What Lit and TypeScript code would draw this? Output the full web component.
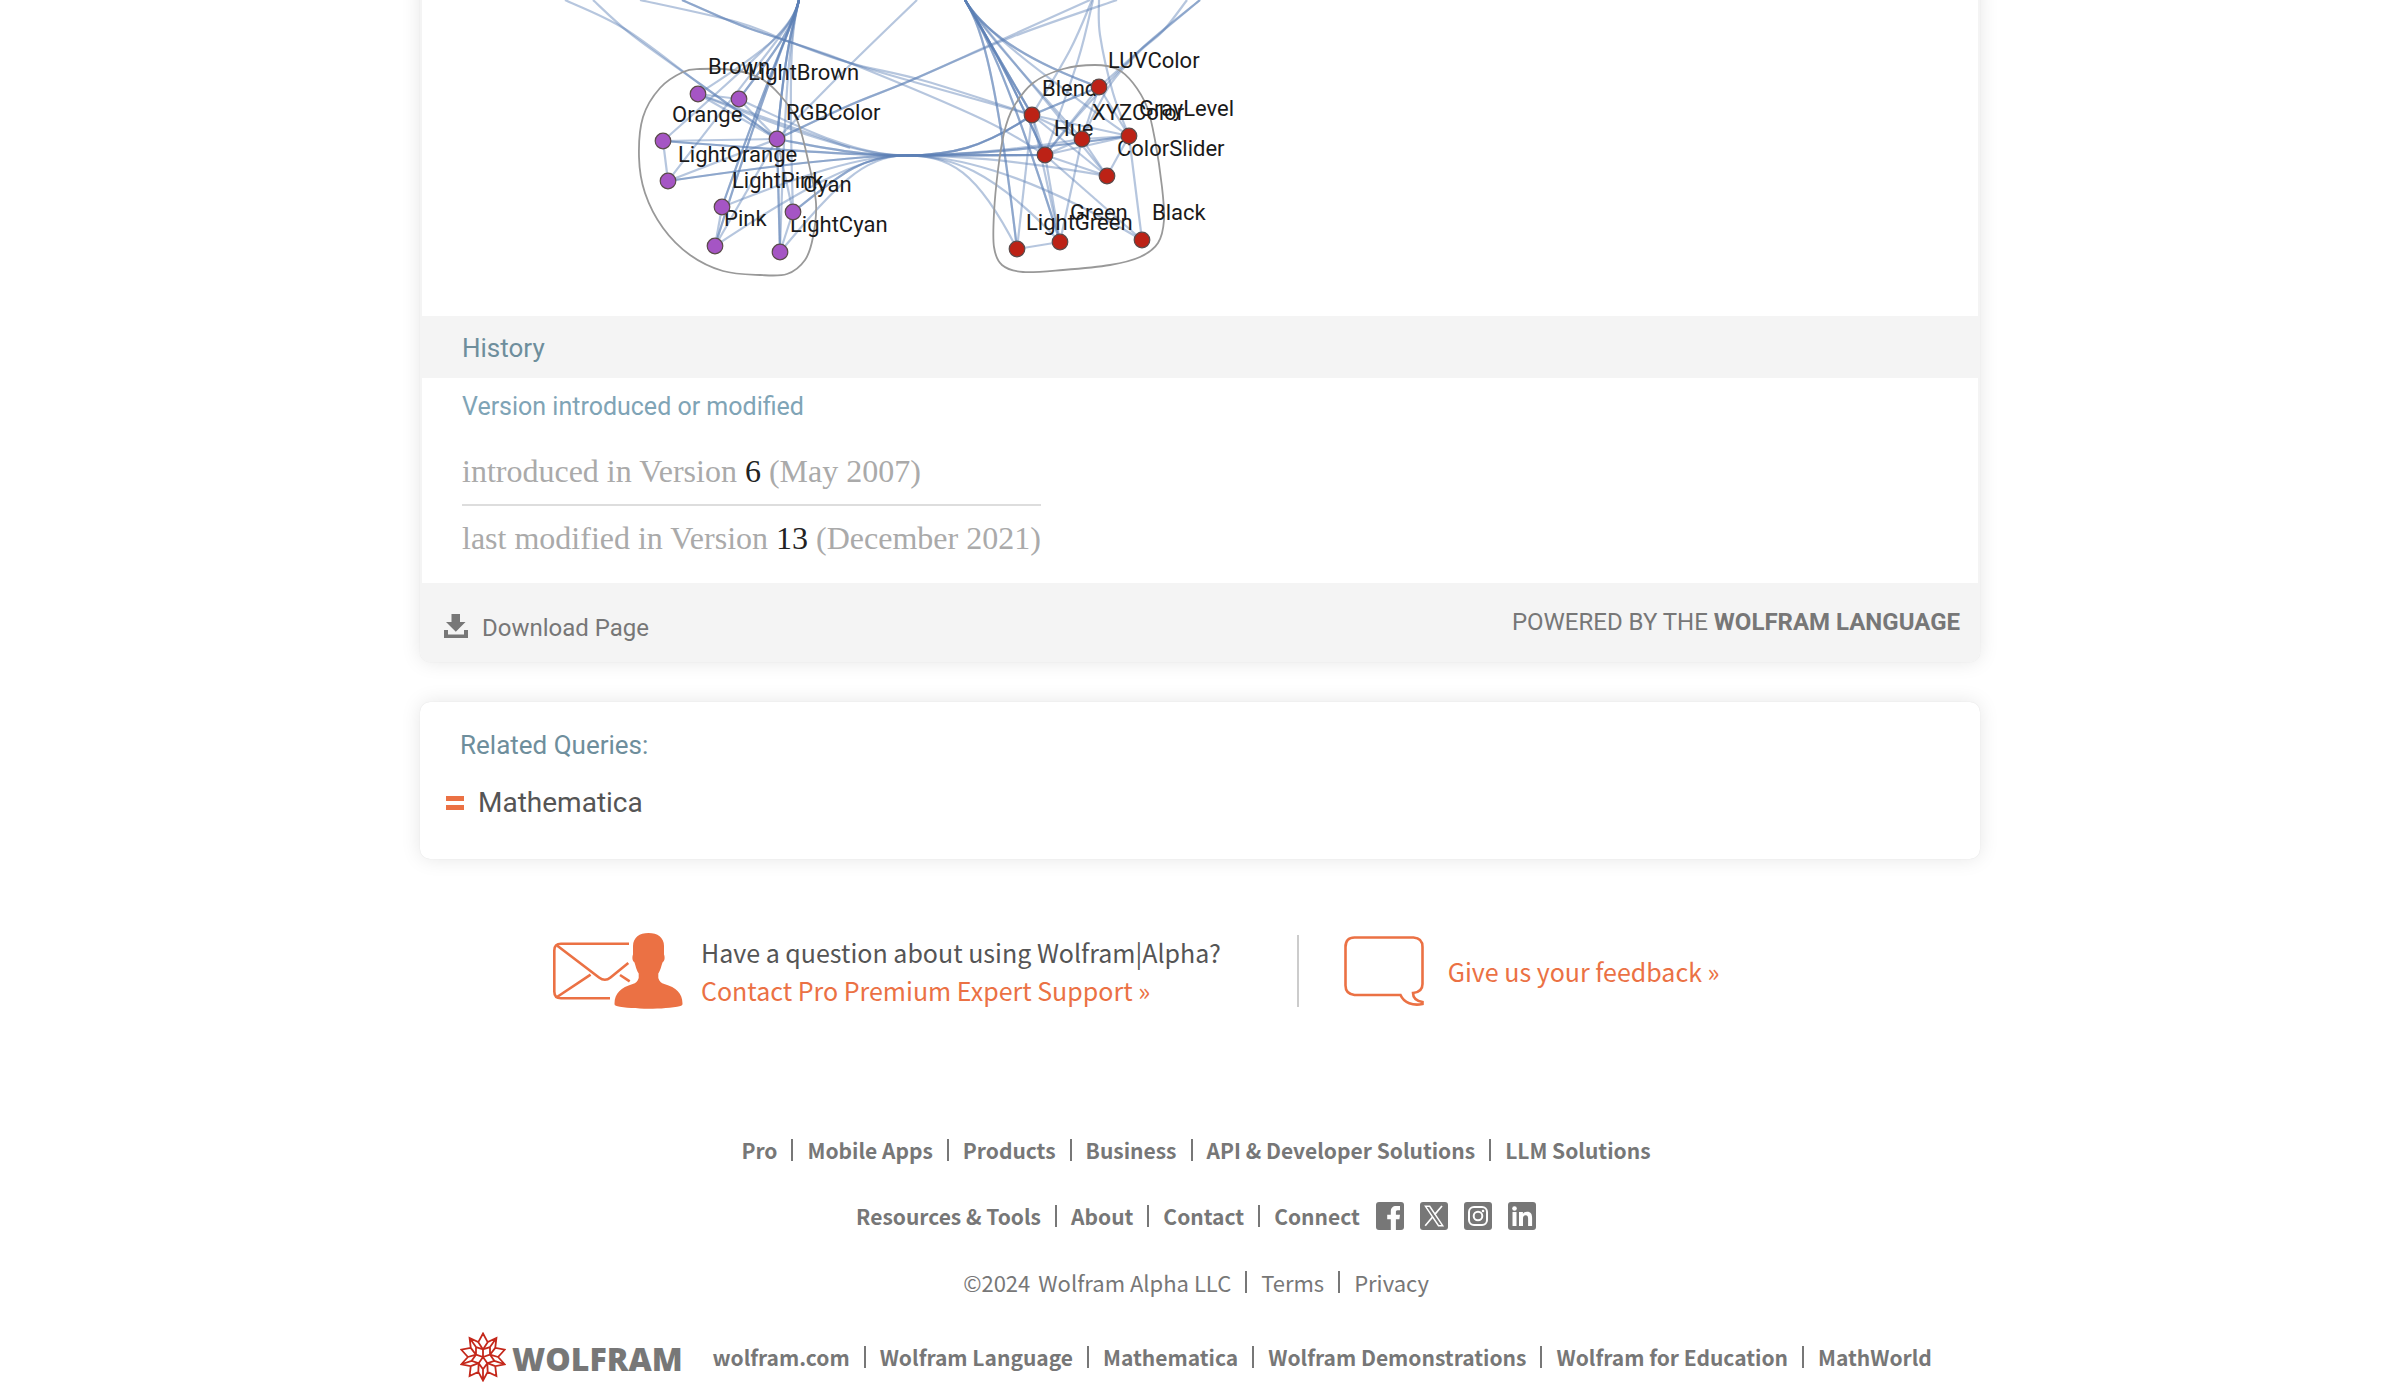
import { LitElement, css, html, svg } from "lit";
import { customElement } from "lit/decorators.js";

type Point = [number, number];
interface Label {
  text: string;
  at: Point;
}

const PURPLE: Record<string, Point> = {
  brown: [698, 94],
  lightBrown: [739, 99],
  rgb: [777, 139],
  orange: [663, 141],
  lightOrange: [668, 181],
  lightPink: [722, 207],
  cyan: [793, 212],
  pink: [715, 246],
  lightCyan: [780, 252],
};

const RED: Record<string, Point> = {
  luv: [1099, 87],
  blend: [1032, 115],
  hue: [1045, 155],
  xyz: [1082, 139],
  gray: [1129, 136],
  slider: [1107, 176],
  black: [1142, 240],
  green: [1060, 242],
  lightGreen: [1017, 249],
};

const LABELS: Label[] = [
  { text: "Brown", at: [708, 74] },
  { text: "LightBrown", at: [748, 80] },
  { text: "Orange", at: [672, 122] },
  { text: "RGBColor", at: [786, 120] },
  { text: "LightOrange", at: [678, 162] },
  { text: "LightPink", at: [732, 188] },
  { text: "Cyan", at: [803, 192] },
  { text: "Pink", at: [724, 226] },
  { text: "LightCyan", at: [790, 232] },
  { text: "LUVColor", at: [1108, 68] },
  { text: "Blend", at: [1042, 96] },
  { text: "XYZColor", at: [1092, 120] },
  { text: "GrayLevel", at: [1139, 116] },
  { text: "Hue", at: [1054, 136] },
  { text: "ColorSlider", at: [1117, 156] },
  { text: "Green", at: [1070, 220] },
  { text: "LightGreen", at: [1026, 230] },
  { text: "Black", at: [1152, 220] },
];

const PURPLE_HULL: Point[] = [
  [700, 69], [733, 70], [760, 78], [780, 95], [797, 120], [808, 160], [816, 203],
  [813, 237], [805, 260], [787, 274], [760, 275], [723, 271], [690, 255],
  [663, 228], [645, 193], [639, 157], [643, 117], [660, 88], [683, 72],
];

const RED_HULL: Point[] = [
  [1095, 65], [1117, 69], [1133, 83], [1147, 107], [1155, 140], [1162, 187],
  [1164, 220], [1158, 243], [1140, 257], [1110, 265], [1063, 270], [1023, 272],
  [1002, 265], [994, 247], [994, 213], [998, 170], [1004, 133], [1013, 108],
  [1033, 83], [1063, 69],
];

/** Closed smooth curve through the given points. */
function closedCurve(pts: Point[]): string {
  const n = pts.length;
  let d = `M${pts[0].join(" ")}`;
  for (let i = 0; i < n; i++) {
    const [a, b, c, e] = [pts[(i + n - 1) % n], pts[i], pts[(i + 1) % n], pts[(i + 2) % n]];
    d += `C${b[0] + (c[0] - a[0]) / 6} ${b[1] + (c[1] - a[1]) / 6} ${c[0] - (e[0] - b[0]) / 6} ${c[1] - (e[1] - b[1]) / 6} ${c[0]} ${c[1]}`;
  }
  return d + "Z";
}

/** Open smooth curve through the given points. */
function openCurve(pts: Point[]): string {
  let d = `M${pts[0].join(" ")}`;
  for (let i = 0; i < pts.length - 1; i++) {
    const a = pts[Math.max(0, i - 1)];
    const b = pts[i];
    const c = pts[i + 1];
    const e = pts[Math.min(pts.length - 1, i + 2)];
    d += `C${b[0] + (c[0] - a[0]) / 6} ${b[1] + (c[1] - a[1]) / 6} ${c[0] - (e[0] - b[0]) / 6} ${c[1] - (e[1] - b[1]) / 6} ${c[0]} ${c[1]}`;
  }
  return d;
}

const P = PURPLE;
const R = RED;

const segment = (a: Point, b: Point): string => `M${a.join(" ")}L${b.join(" ")}`;

/** Node of the left group to the middle of the horizontal bundle. */
const toBundle = (p: Point): string =>
  `M${p.join(" ")}C${p[0] + (880 - p[0]) * 0.5} ${p[1] + (155 - p[1]) * 0.6} 860 155.5 905 155.5`;

/** Middle of the horizontal bundle to a node of the right group. */
const fromBundle = (p: Point): string =>
  `M905 155.5C950 155.5 ${955 + (p[0] - 955) * 0.35} ${155 + (p[1] - 155) * 0.16} ${p.join(" ")}`;

const fromTopLeft = (p: Point): string =>
  `M799 0C793 26 ${787 + (p[0] - 787) * 0.12} ${44} ${p.join(" ")}`;

const fromTopRight = (p: Point): string =>
  `M965 0C978 22 ${990 + (p[0] - 990) * 0.16} ${54} ${p.join(" ")}`;

const EDGES: string[] = [
  ...[P.rgb, P.rgb, P.orange, P.orange, P.lightOrange, P.lightOrange, P.lightPink, P.cyan, P.cyan, P.pink, P.lightCyan, P.brown, P.lightBrown].map(toBundle),
  ...[R.blend, R.blend, R.blend, R.hue, R.hue, R.hue, R.xyz, R.gray, R.gray, R.slider, R.black, R.green, R.lightGreen].map(fromBundle),
  ...[P.brown, P.lightBrown, P.lightBrown, P.orange, P.lightOrange, P.lightPink, P.lightPink, P.pink, P.pink, P.rgb, P.rgb, P.rgb, P.cyan, P.lightCyan].map(fromTopLeft),
  ...[R.luv, R.luv, R.blend, R.blend, R.blend, R.hue, R.hue, R.hue, R.xyz, R.gray, R.slider, R.green, R.green, R.lightGreen, R.lightGreen].map(fromTopRight),
  openCurve([[565, 0], [625, 29], [700, 84], P.rgb]),
  openCurve([[593, 0], [632, 35], [700, 84], P.rgb]),
  openCurve([[640, 0], [737, 22], [790, 42], [850, 63], [925, 81], R.blend]),
  openCurve([[682, 0], [740, 25], [790, 42], [850, 63], [914, 82], R.blend]),
  openCurve([[682, 0], [740, 25], [790, 42], [850, 63], [984, 120], R.hue]),
  openCurve([[917, 0], [850, 65], P.rgb]),
  openCurve([[1090, 0], [990, 45], [907, 82], [850, 105], P.rgb]),
  openCurve([[1117, 0], [1012, 37], [907, 82], [850, 105], P.rgb]),
  openCurve([[1092, 0], [1070, 50], R.blend]),
  openCurve([[1093, 0], [1078, 60], R.hue]),
  openCurve([[1099, 0], [1100, 35], [1113, 93], R.gray]),
  openCurve([[1200, 0], [1140, 50], [1118, 70], R.luv]),
  openCurve([[1200, 0], [1140, 50], [1083, 110], R.hue]),
  openCurve([[1187, 0], [1163, 31], [1140, 51], [1110, 85], R.xyz]),
  segment(P.brown, P.rgb),
  segment(P.brown, P.lightBrown),
  segment(P.brown, [850, 148]),
  segment(P.lightBrown, P.rgb),
  segment(P.orange, P.rgb),
  segment(P.orange, P.lightOrange),
  segment(P.lightOrange, P.rgb),
  segment(P.lightPink, P.pink),
  segment(P.pink, P.rgb),
  segment(P.rgb, P.cyan),
  segment(P.rgb, P.lightCyan),
  segment(P.rgb, P.lightCyan),
  segment(P.cyan, P.lightCyan),
  segment(R.blend, R.luv),
  segment(R.blend, R.luv),
  segment(R.blend, R.gray),
  segment(R.blend, R.slider),
  segment(R.blend, R.hue),
  segment(R.blend, R.green),
  segment(R.blend, R.lightGreen),
  segment(R.blend, R.xyz),
  segment(R.hue, R.gray),
  segment(R.hue, R.luv),
  segment(R.hue, R.slider),
  segment(R.hue, R.green),
  segment(R.hue, R.black),
  segment(R.hue, R.xyz),
  segment(R.luv, R.gray),
  segment(R.luv, R.xyz),
  segment(R.xyz, R.gray),
  segment(R.xyz, R.slider),
  segment(R.xyz, R.green),
  segment(R.gray, R.slider),
  segment(R.gray, R.black),
  segment(R.green, R.lightGreen),
];

/** Lines of the ten-pointed star emblem, in a box of 46 by 50. */
function emblem(): string {
  const at = (deg: number, r: number): Point => {
    const t = (deg * Math.PI) / 180;
    return [+(23 + r * 0.97 * Math.sin(t)).toFixed(2), +(25 - r * Math.cos(t)).toFixed(2)];
  };
  let d = "";
  for (let k = 0; k < 10; k++) {
    d += `${k ? "L" : "M"}${at(k * 36, 23.5).join(" ")}L${at(k * 36 + 18, 15.6).join(" ")}`;
  }
  d += "Z";
  for (let k = 0; k < 5; k++) {
    const base = k * 72;
    const inner = at(base, 7.6);
    d += segment([23, 25], inner);
    d += `M${at(base - 36, 12.3).join(" ")}L${inner.join(" ")}L${at(base + 36, 12.3).join(" ")}`;
    d += `M${at(base - 18, 15.6).join(" ")}L${inner.join(" ")}L${at(base + 18, 15.6).join(" ")}`;
    d += segment(at(base + 36, 12.3), at(base + 36, 23.5));
  }
  return d;
}

@customElement("color-graph")
class ColorGraph extends LitElement {
  static styles = css`
    :host {
      display: block;
    }
    .graph {
      display: block;
      width: 800px;
      max-width: 100%;
      height: auto;
    }
    .edge {
      fill: none;
      stroke: #5e81b5;
      stroke-opacity: 0.45;
      stroke-width: 2.2;
    }
    .hull {
      fill: none;
      stroke: #999;
      stroke-width: 1.8;
    }
    .node {
      stroke: #5a4a4a;
      stroke-width: 1.2;
    }
    .purple {
      fill: #a555c4;
    }
    .red {
      fill: #bc2216;
    }
    .label {
      font: 22px Roboto, sans-serif;
      fill: #1a1a1a;
    }
  `;

  render() {
    return html`
      <svg class="graph" viewBox="460 0 800 316" role="img" aria-label="Network of related color functions">
        ${EDGES.map((d) => svg`<path class="edge" d=${d} />`)}
        <path class="hull" d=${closedCurve(PURPLE_HULL)} />
        <path class="hull" d=${closedCurve(RED_HULL)} />
        ${LABELS.map((l) => svg`<text class="label" x=${l.at[0]} y=${l.at[1]}>${l.text}</text>`)}
        ${Object.values(PURPLE).map((p) => svg`<circle class="node purple" cx=${p[0]} cy=${p[1]} r="7.8" />`)}
        ${Object.values(RED).map((p) => svg`<circle class="node red" cx=${p[0]} cy=${p[1]} r="7.8" />`)}
      </svg>
    `;
  }
}

const SOCIAL = [
  {
    name: "Facebook",
    art: svg`<path fill="#fff" d="M14.8 28V17.2h-3.6v-4.4h3.6V9.4C14.8 6 16.8 4 20.2 4H24v4.3h-2.4c-1.3 0-1.7.7-1.7 1.8v2.7H24l-.6 4.4h-3.5V28z"/>`,
  },
  {
    name: "X",
    art: svg`<path fill="none" stroke="#fff" stroke-width="1.5" d="M5.5 4.3h4.2l13 19.4h-4.2z"/><path fill="none" stroke="#fff" stroke-width="1.7" d="M22 4l-7.4 8.6M12.800 14.800L5.200 23.800"/>`,
  },
  {
    name: "Instagram",
    art: svg`<g fill="none" stroke="#fff" stroke-width="2"><rect x="5" y="5" width="18" height="18" rx="5"/><circle cx="14" cy="14" r="4.300"/></g><circle cx="19" cy="9" r="1.300" fill="#fff"/>`,
  },
  {
    name: "LinkedIn",
    art: svg`<g fill="#fff"><circle cx="6.500" cy="6.500" r="2.300"/><rect x="4.500" y="10" width="4" height="14"/><path d="M11 10h3.900v1.900c.8-1.400 2.300-2.200 4.200-2.200 3.900 0 5 2.500 5 6.100V24h-4v-7.300c0-1.900-.4-3.500-2.400-3.500S15 14.700 15 16.700V24h-4z"/></g>`,
  },
];

const MAIN_LINKS = ["Pro", "Mobile Apps", "Products", "Business", "API & Developer Solutions", "LLM Solutions"];
const INFO_LINKS = ["Resources & Tools", "About", "Contact", "Connect"];
const LEGAL_LINKS = ["Terms", "Privacy"];
const BRAND_LINKS = ["wolfram.com", "Wolfram Language", "Mathematica", "Wolfram Demonstrations", "Wolfram for Education", "MathWorld"];

const links = (names: string[]) => names.map((name) => html`<li class="item"><a class="link" href="#">${name}</a></li>`);

@customElement("site-footer")
class SiteFooter extends LitElement {
  static styles = css`
    :host {
      display: flex;
      flex-direction: column;
      align-items: center;
      box-sizing: border-box;
      padding: 108px 8px 0 0;
      font-family: "Noto Sans CJK SC", sans-serif;
      font-size: 21px;
      color: #777;
    }
    .row {
      display: flex;
      align-items: center;
      min-height: 66px;
      font-weight: 600;
    }
    .legal {
      font-size: 22px;
      font-weight: 400;
    }
    .brand {
      min-height: 68px;
      margin-top: 8px;
      gap: 30px;
    }
    .list {
      display: flex;
      margin: 0;
      padding: 0;
      list-style: none;
      line-height: 22px;
    }
    .item + .item {
      margin-left: 14px;
      padding-left: 14px;
      border-left: 2px solid #777;
    }
    .link {
      color: inherit;
      text-decoration: none;
    }
    .social {
      display: flex;
      gap: 16px;
      margin-left: 16px;
    }
    .badge {
      display: block;
      width: 28px;
      height: 28px;
    }
    .owner {
      margin-left: 8px;
    }
    .logo {
      display: flex;
      align-items: center;
      gap: 6px;
      color: inherit;
      text-decoration: none;
    }
    .star {
      width: 46px;
      height: 50px;
      fill: none;
      stroke: #c4281b;
      stroke-width: 1.8;
    }
    .wordmark {
      padding-top: 4px;
      font: 800 32px/38px "Open Sans", sans-serif;
    }
  `;

  render() {
    return html`
      <nav class="row" aria-label="Products"><ul class="list">${links(MAIN_LINKS)}</ul></nav>
      <nav class="row" aria-label="Information">
        <ul class="list">${links(INFO_LINKS)}</ul>
        <div class="social">
          ${SOCIAL.map(
            (s) => html`<a href="#" aria-label=${s.name}>
              <svg class="badge" viewBox="0 0 28 28"><rect width="28" height="28" rx="3" fill="#777" />${s.art}</svg>
            </a>`,
          )}
        </div>
      </nav>
      <div class="row legal">
        <ul class="list">
          <li class="item">©2024<a class="link owner" href="#">Wolfram Alpha LLC</a></li>
          ${links(LEGAL_LINKS)}
        </ul>
      </div>
      <nav class="row brand" aria-label="Company">
        <a class="logo" href="#">
          <svg class="star" viewBox="0 0 46 50" aria-hidden="true"><path d=${emblem()} /></svg>
          <span class="wordmark">WOLFRAM</span>
        </a>
        <ul class="list">${links(BRAND_LINKS)}</ul>
      </nav>
    `;
  }
}

@customElement("app-root")
class AppRoot extends LitElement {
  static styles = css`
    :host {
      display: block;
      overflow: hidden;
      background: #fff;
      font-family: Roboto, sans-serif;
    }
    .page {
      box-sizing: border-box;
      width: 65%;
      min-width: 1200px;
      margin: 0 auto;
    }
    .card {
      background: #fff;
      border-radius: 10px;
      box-shadow: 0 0 20px rgba(0, 0, 0, 0.1), 0 0 1px rgba(0, 0, 0, 0.12);
    }
    .results {
      margin-top: -20px;
      overflow: hidden;
      padding-top: 20px;
    }
    .pod {
      border: solid #f4f4f4;
      border-width: 0 2px;
    }
    .figure {
      padding-left: 38px;
    }
    .title {
      margin: 0;
      padding: 2px 42px 0;
      background: #f4f4f4;
      color: #6e8e9c;
      font-size: 26px;
      font-weight: 400;
      line-height: 60px;
    }
    .body {
      padding: 13px 40px 12px;
    }
    .subtitle {
      margin: 0 0 16px;
      color: #7fa4b6;
      font-size: 25px;
      font-weight: 400;
      line-height: 32px;
    }
    .history {
      border-collapse: collapse;
      color: #aaa;
      font: 32px "Liberation Serif", serif;
    }
    .entry {
      height: 65px;
      padding: 0;
      text-align: left;
      white-space: nowrap;
    }
    .first {
      border-bottom: 2px solid #ddd;
    }
    .number {
      color: #222;
      font-weight: 400;
    }
    .tools {
      display: flex;
      justify-content: space-between;
      align-items: flex-start;
      min-height: 56px;
      padding: 23px 20px 0 24px;
      background: #f4f4f4;
      color: #777;
      font-size: 24px;
      line-height: 32px;
    }
    .download {
      display: flex;
      align-items: center;
      gap: 14px;
      margin-top: 6px;
      padding: 0;
      border: 0;
      background: none;
      color: inherit;
      font: inherit;
    }
    .glyph {
      width: 24px;
      height: 24px;
      margin-bottom: 4px;
      fill: #777;
    }
    .related {
      box-sizing: border-box;
      min-height: 157px;
      margin-top: 40px;
      padding: 27px 26px;
    }
    .heading {
      margin: 0 0 22px;
      padding-left: 14px;
      color: #6e8e9c;
      font-size: 26px;
      font-weight: 400;
      line-height: 32px;
    }
    .query {
      display: flex;
      align-items: center;
      gap: 14px;
      color: #555;
      font-size: 28px;
      line-height: 40px;
      text-decoration: none;
    }
    .equals {
      width: 18px;
      height: 14px;
      fill: #eb7144;
    }
    .help {
      display: flex;
      align-items: center;
      padding: 74px 0 0 133px;
      font: 25px/38px "Noto Sans CJK SC", sans-serif;
      color: #555;
    }
    .question {
      display: flex;
      align-items: center;
      gap: 18px;
      padding-right: 76px;
    }
    .feedback {
      display: flex;
      align-items: center;
      gap: 24px;
      padding-left: 45px;
      color: #eb7144;
      text-decoration: none;
    }
    .split {
      width: 2px;
      height: 72px;
      background: #ccc;
    }
    .copy {
      margin: 0;
    }
    .action {
      color: #eb7144;
      text-decoration: none;
    }
    .mail {
      width: 130px;
      height: 76px;
    }
    .bubble {
      width: 80px;
      height: 70px;
    }
    .line {
      fill: none;
      stroke: #eb7144;
      stroke-width: 2.6;
    }
    .solid {
      fill: #eb7144;
    }
  `;

  render() {
    return html`
      <main class="page">
        <section class="card results">
          <div class="pod figure"><color-graph></color-graph></div>
          <h2 class="title">History</h2>
          <div class="pod body">
            <h3 class="subtitle">Version introduced or modified</h3>
            <table class="history">
              <tr><td class="entry first">introduced in Version <b class="number">6</b> (May 2007)</td></tr>
              <tr><td class="entry">last modified in Version <b class="number">13</b> (December 2021)</td></tr>
            </table>
          </div>
          <div class="tools">
            <button class="download" type="button">
              <svg class="glyph" viewBox="0 0 24 24" aria-hidden="true">
                <path d="M7.500 0h8.500v8h5.500L11.800 17.700 2 8h5.500zM0 16h4v4.500h16V16h4v8H0z" />
              </svg>
              Download Page
            </button>
            <span>POWERED BY THE <strong>WOLFRAM LANGUAGE</strong></span>
          </div>
        </section>

        <section class="card related">
          <h2 class="heading">Related Queries:</h2>
          <a class="query" href="#">
            <svg class="equals" viewBox="0 0 18 14" aria-hidden="true"><path d="M0 0h18v5H0zM0 9h18v5H0z" /></svg>
            Mathematica
          </a>
        </section>

        <section class="help">
          <div class="question">
            <svg class="mail" viewBox="0 0 130 76" aria-hidden="true">
              <path class="line" d="M76 10.700H8q-6.700 0-6.700 6.700V58.500q0 6.800 6.700 6.800H57" />
              <path class="line" d="M4 12.500L46 44.500q6 4.500 11.500 0L75.300 30M37.600 41.700L4 64M67 42l9.700 6.300" />
              <path
                class="solid"
                d="M80 13C80 4.500 86.500 0 95.500 0S111 4.500 111 13v8.500c1.200 3 .5 6.500-1 7.500-1 0-1.700 7-4.700 11.500V45c1 3.500 3 5 6 6 12 3.500 18 9 18.200 19.500 0 1.500-.5 2-2 2.500-17 3.700-47 3.700-64 0-1.500-.5-2-1-2-2.500C61.700 60 68 54.500 79.700 51c3-1 5-2.500 6-6V40.500C82.700 36 82 29 81 29c-1.500-1-2.200-4.500-1-7.500z"
              />
            </svg>
            <p class="copy">
              Have a question about using Wolfram|Alpha?<br />
              <a class="action" href="#">Contact Pro Premium Expert Support »</a>
            </p>
          </div>
          <div class="split"></div>
          <a class="feedback" href="#">
            <svg class="bubble" viewBox="0 0 80 70" aria-hidden="true">
              <path
                class="line"
                d="M56.500 59H10.500Q1.500 58 1.500 49.500V11Q1.500 1.500 10.500 1.500H69.500Q78.500 2 78.500 11V48Q78.500 56 69 57C69 63 73 65 78.500 66V68C69 70 60 67 56.500 59z"
              />
            </svg>
            Give us your feedback »
          </a>
        </section>
      </main>
      <site-footer></site-footer>
    `;
  }
}
